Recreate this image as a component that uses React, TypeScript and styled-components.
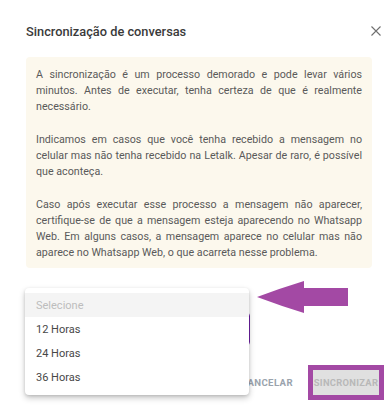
import React from 'react'
import styled, { createGlobalStyle } from 'styled-components'

const GlobalStyle = createGlobalStyle`
  html, body {
    margin: 0;
    padding: 0;
    background: #ffffff;
  }
  body {
    font-family: Roboto, "Noto Sans", Arial, sans-serif;
  }
`

const Dialog = styled.div`
  position: relative;
  width: 386px;
  height: 411px;
  box-sizing: border-box;
  padding: 22px 14px 0 26px;
  background: #fff;
  overflow: hidden;
`

const Header = styled.header`
  display: flex;
  align-items: center;
  justify-content: space-between;
  height: 18px;
`

const Title = styled.h2`
  margin: 0;
  font-size: 12.8px;
  font-weight: 500;
  color: #3a3a3a;
`

const CloseButton = styled.button`
  display: flex;
  margin-right: -9px;
  padding: 0;
  border: 0;
  background: none;
  color: #6f6f6f;
  cursor: pointer;
`

const Notice = styled.section`
  margin-top: 17px;
  padding: 10px 10px 7px;
  border-radius: 4px;
  background: #fcf8ed;
  color: #5a5a5a;
  font-size: 10.7px;
  line-height: 16px;
  text-align: justify;
`

const Paragraph = styled.p`
  margin: 0 0 17px;
  &:last-child {
    margin-bottom: 0;
  }
`

const Field = styled.div`
  position: relative;
  margin-top: 44px;
  width: 224px;
  height: 34px;
  box-sizing: border-box;
  border: 1px solid #6c1fa3;
  border-radius: 4px;
`

const Menu = styled.ul`
  position: absolute;
  top: -25px;
  left: -2px;
  width: 224px;
  margin: 0;
  padding: 5px 0 6px;
  list-style: none;
  background: #fff;
  border-radius: 4px;
  box-shadow: 0 3px 6px rgba(0, 0, 0, 0.22), 0 1px 3px rgba(0, 0, 0, 0.12);
  z-index: 2;
`

const Option = styled.li<{ $placeholder?: boolean }>`
  height: 24px;
  display: flex;
  align-items: center;
  padding-left: 11px;
  font-size: 11px;
  color: ${p => (p.$placeholder ? '#bdbdbd' : '#474747')};
  background: ${p => (p.$placeholder ? '#f4f4f4' : 'transparent')};
`

const Actions = styled.div`
  display: flex;
  justify-content: flex-end;
  align-items: center;
  margin-top: 24px;
  margin-right: -7px;
`

const TextButton = styled.button`
  height: 25px;
  margin-right: 16px;
  padding: 0 4px;
  border: 0;
  background: none;
  color: #9aa3ad;
  font-family: inherit;
  font-size: 9.6px;
  font-weight: 700;
  letter-spacing: 0.4px;
`

const DisabledButton = styled.button`
  width: 66px;
  height: 25px;
  padding: 0;
  border: 0;
  border-radius: 0;
  background: #e0e0e0;
  color: #b8b8b8;
  font-family: inherit;
  font-size: 9.4px;
  font-weight: 700;
  letter-spacing: 0.3px;
  outline: 5px solid #a349a4;
`

const Arrow = styled.svg`
  position: absolute;
  left: 257px;
  top: 281px;
  z-index: 3;
`

const options = ['12 Horas', '24 Horas', '36 Horas']

export default function App() {
  return (
    <>
      <GlobalStyle />
      <Dialog>
        <Header>
          <Title>Sincronização de conversas</Title>
          <CloseButton aria-label="Fechar">
            <svg width="10" height="10" viewBox="0 0 10 10">
              <path d="M0.5 0.5 L9.5 9.5 M9.5 0.5 L0.5 9.5" stroke="currentColor" strokeWidth="1.1" />
            </svg>
          </CloseButton>
        </Header>

        <Notice>
          <Paragraph>
            A sincronização é um processo demorado e pode levar vários minutos. Antes de executar,
            tenha certeza de que é realmente necessário.
          </Paragraph>
          <Paragraph>
            Indicamos em casos que você tenha recebido a mensagem no celular mas não tenha recebido
            na Letalk. Apesar de raro, é possível que aconteça.
          </Paragraph>
          <Paragraph>
            Caso após executar esse processo a mensagem não aparecer, certifique-se de que a mensagem
            esteja aparecendo no Whatsapp Web. Em alguns casos, a mensagem aparece no celular mas não
            aparece no Whatsapp Web, o que acarreta nesse problema.
          </Paragraph>
        </Notice>

        <Field>
          <Menu>
            <Option $placeholder>Selecione</Option>
            {options.map(o => (
              <Option key={o}>{o}</Option>
            ))}
          </Menu>
        </Field>

        <Actions>
          <TextButton>CANCELAR</TextButton>
          <DisabledButton disabled>SINCRONIZAR</DisabledButton>
        </Actions>

        <Arrow width="91" height="32" viewBox="0 0 91 32">
          <path d="M0 16 Q24 7 47 0 L47 7 L91 7 L91 25 L47 25 L47 32 Q24 25 0 16 Z" fill="#a349a4" />
        </Arrow>
      </Dialog>
    </>
  )
}
